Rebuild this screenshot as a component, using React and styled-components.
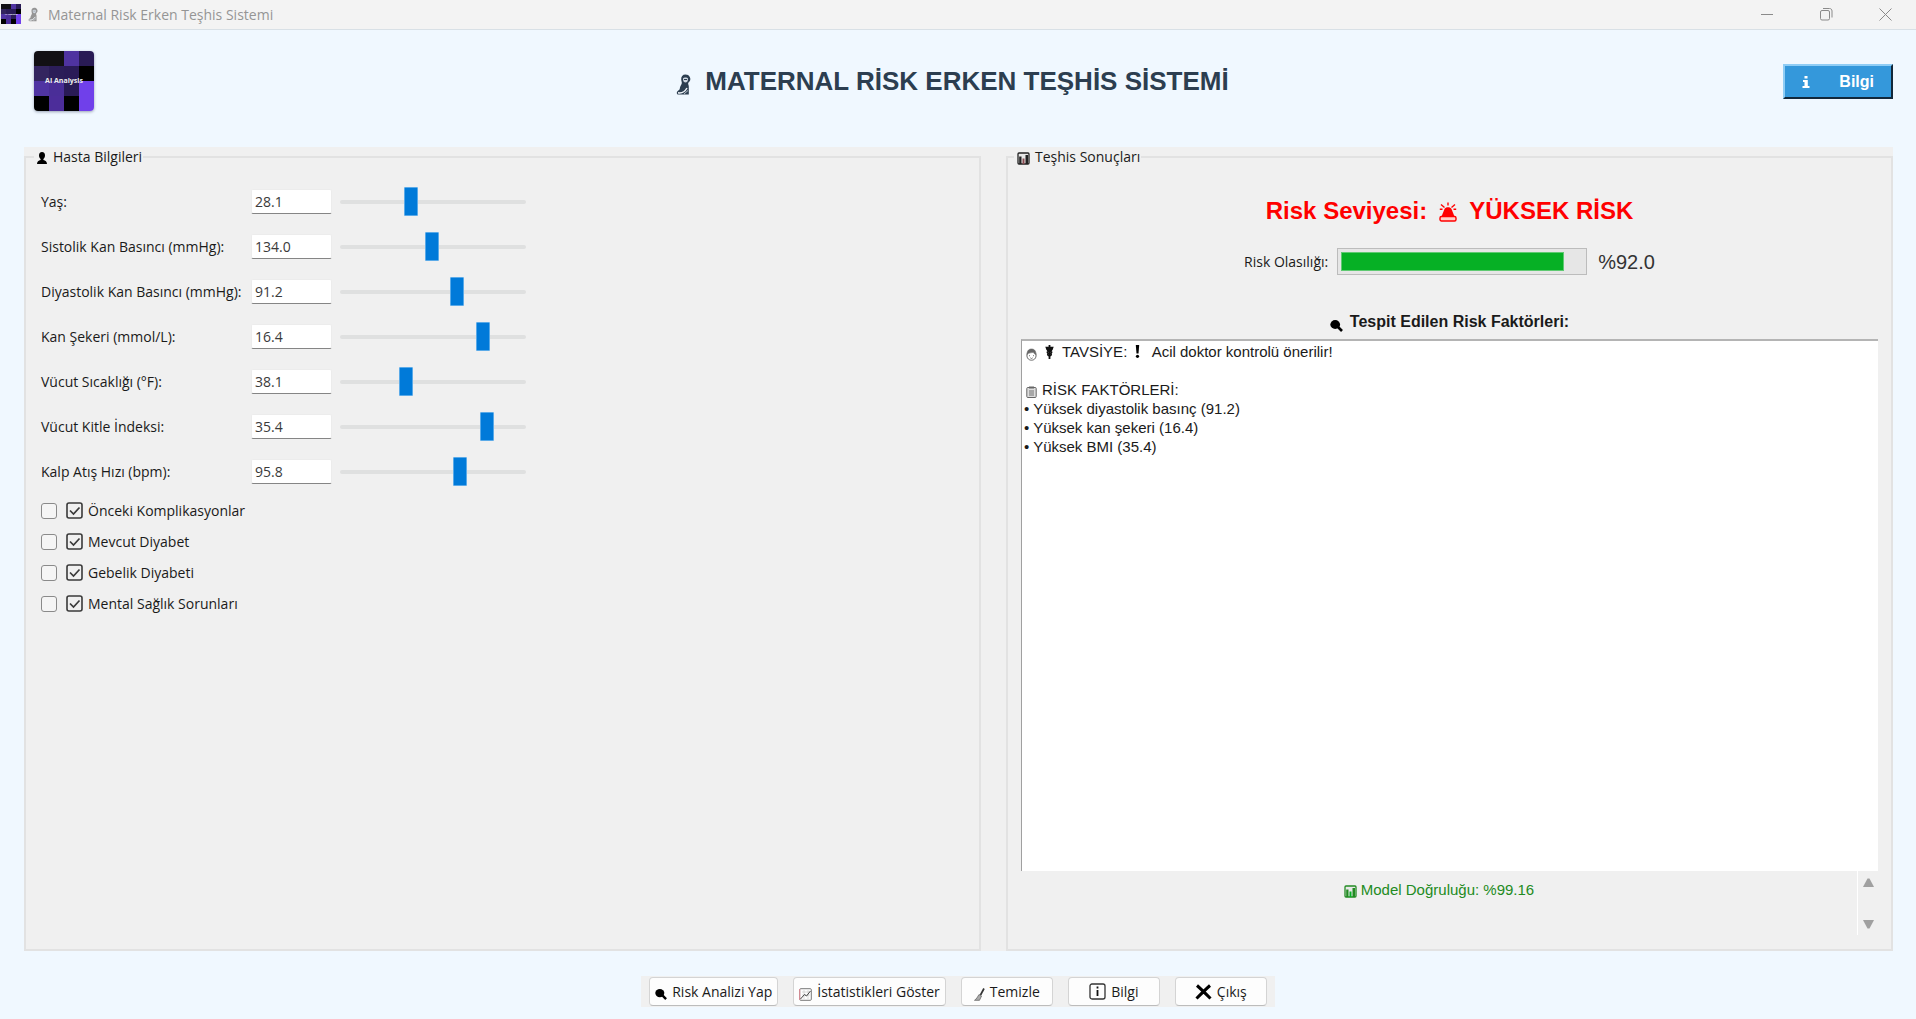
import React from "react";
import styled, { createGlobalStyle } from "styled-components";

const GlobalStyle = createGlobalStyle`
  * {
    box-sizing: border-box;
  }
  body {
    margin: 0;
    background: #f0f8ff;
    color: #1a1a1a;
    font-family: "Open Sans", "Noto Sans", sans-serif;
    font-size: 14px;
  }
`;

const arial = `"Liberation Sans", Arial, sans-serif`;

const Window = styled.div`
  display: flex;
  flex-direction: column;
  min-height: 100vh;
`;

const TitleBar = styled.div`
  display: flex;
  align-items: center;
  height: 30px;
  padding: 0 24px 1px 1px;
  background: #f3f3f3;
  border-bottom: 1px solid #d8e0e6;
  color: #959595;
`;

const TitleText = styled.span`
  flex: 1;
  margin-left: 10px;
  font-size: 14px;
`;

const TitleIcon = styled.span`
  display: flex;
  margin-left: 7px;
`;

const WindowButtons = styled.div`
  display: flex;
  gap: 46px;
`;

const WindowButton = styled.button`
  display: flex;
  padding: 0;
  border: none;
  background: none;
  color: #8a8a8a;
`;

const Header = styled.header`
  display: flex;
  align-items: center;
  height: 117px;
  padding: 0 23px 15px 34px;
`;

const LogoBox = styled.div`
  display: flex;
  margin: 0 28px 0 0;
  border-radius: 4px;
  overflow: hidden;
  box-shadow: 0 1px 3px #9aa3b5;
`;

const Heading = styled.h1`
  display: flex;
  flex: 1;
  align-items: center;
  justify-content: center;
  gap: 14px;
  margin: 0;
  color: #2c3e50;
  font-family: ${arial};
  font-size: 26px;
  line-height: 30px;

  svg {
    margin-top: 6px;
  }
`;

const InfoButton = styled.button`
  display: flex;
  align-items: center;
  justify-content: space-between;
  width: 110px;
  height: 35px;
  padding: 2px 17px 0;
  border: 2px solid;
  border-color: #8fcdf5 #12283a #12283a #8fcdf5;
  background: #3498db;
  color: white;
  font-family: ${arial};
  font-size: 16px;
  font-weight: bold;
`;

const Panels = styled.main`
  display: grid;
  flex: 1;
  grid-template-columns: 957fr 887fr;
  gap: 25px;
  margin: 0 23px 0 24px;
  background: #f0f0f0;
`;

const Panel = styled.fieldset`
  display: flex;
  flex-direction: column;
  min-width: 0;
  margin: 0;
  padding: 0 ${(props) => props.$side}px 14px;
  border: 2px solid #e2e2e2;
`;

const Legend = styled.legend`
  display: flex;
  align-items: center;
  gap: ${(props) => props.$gap}px;
  height: 19px;
  margin-left: -7px;
  padding: 0 1px 0 3px;
  line-height: 18px;

  svg {
    margin-top: 3px;
  }
`;

const Fields = styled.div`
  padding-top: 13px;
`;

const Field = styled.div`
  display: grid;
  grid-template-columns: 210px 81px 186px;
  align-items: center;
  height: 45px;
`;

const FieldLabel = styled.label`
  white-space: nowrap;
`;

const NumberBox = styled.input`
  width: 100%;
  height: 25px;
  padding: 0 3px;
  border: 1px solid #ececec;
  border-bottom: 1px solid #858585;
  border-radius: 2px;
  outline: none;
  background: white;
  color: #3a3a3a;
  font: inherit;
`;

const Slider = styled.input`
  width: 186px;
  height: 29px;
  margin: 0 0 0 8px;
  background: none;
  appearance: none;

  &::-webkit-slider-runnable-track {
    height: 4px;
    border-radius: 2px;
    background: #dfe0e0;
  }
  &::-webkit-slider-thumb {
    width: 14px;
    height: 29px;
    margin-top: -13px;
    border: 1px solid #5aaae8;
    border-radius: 1px;
    background: #007ad9;
    appearance: none;
  }
`;

const Checks = styled.div`
  padding-top: 1px;
`;

const CheckRow = styled.label`
  display: flex;
  align-items: center;
  height: 31px;
`;

const CheckBox = styled.input`
  width: 16px;
  height: 16px;
  margin: 0 9px 0 0;
  border: 1px solid #8a8a8a;
  border-radius: 3px;
  background: #f5f5f5;
  appearance: none;

  &:checked {
    background: #007ad9;
  }
`;

const CheckText = styled.span`
  margin-left: 5px;
`;

const RiskLevel = styled.div`
  display: flex;
  align-items: flex-end;
  justify-content: center;
  gap: 12px;
  margin-top: 30px;
  color: red;
  font-family: ${arial};
  font-size: 24px;
  font-weight: bold;
  line-height: 30px;
`;

const Probability = styled.div`
  display: flex;
  align-items: center;
  justify-content: center;
  margin-top: 22px;
`;

const ProgressBox = styled.div`
  width: 250px;
  height: 27px;
  margin: 0 11px 0 9px;
  padding: 3px;
  border: 1px solid #bcbcbc;
  background: #e6e6e6;
`;

const ProgressFill = styled.div`
  height: 100%;
  border: 1px solid #5fca72;
  background: #06b025;
`;

const Percent = styled.span`
  color: #333;
  font-family: ${arial};
  font-size: 20px;
  line-height: 24px;
`;

const FactorsTitle = styled.h2`
  display: flex;
  align-items: center;
  justify-content: center;
  gap: 7px;
  margin: 36px 0 7px;
  font-family: ${arial};
  font-size: 16px;
  line-height: 20px;

  svg {
    margin-top: 8px;
  }
`;

const Report = styled.div`
  flex: 1;
  padding: 1px 2px;
  border-top: 2px solid #b4b4b4;
  border-left: 1px solid #a0a0a0;
  background: white;
  font-family: ${arial};
  font-size: 15px;
`;

const Line = styled.div`
  display: flex;
  align-items: center;
  gap: ${(props) => props.$gap || 0}px;
  height: 19px;
  padding-left: ${(props) => (props.$gap ? 2 : 0)}px;
  white-space: pre;

  svg:first-child {
    margin-top: 5px;
  }
`;

const Bottom = styled.div`
  display: flex;
  height: 64px;
`;

const Accuracy = styled.div`
  display: flex;
  flex: 1;
  align-items: center;
  align-self: flex-start;
  justify-content: center;
  gap: 4px;
  height: 36px;
  color: #228b22;
  font-family: ${arial};
  font-size: 15px;

  svg {
    margin-top: 5px;
  }
`;

const ScrollBar = styled.div`
  display: flex;
  flex-direction: column;
  align-items: center;
  justify-content: space-between;
  width: 21px;
  padding: 7px 0 6px;
  border-left: 1px solid white;
`;

const ArrowButton = styled.button`
  display: flex;
  padding: 0;
  border: none;
  background: none;
`;

const Actions = styled.footer`
  display: flex;
  align-self: center;
  gap: 15px;
  margin: 25px 0 12px;
  padding: 1px 8px;
  background: #f0f0f0;
`;

const ActionButton = styled.button`
  display: flex;
  align-items: center;
  justify-content: center;
  gap: 5px;
  min-width: 92px;
  height: 29px;
  padding: 0 5px;
  border: 1px solid #d4d4d4;
  border-bottom-color: #bcbcbc;
  border-radius: 4px;
  background: #fdfdfd;
  color: #1a1a1a;
  font: inherit;
  white-space: nowrap;
`;

const LowIcon = styled.span`
  display: flex;
  margin-top: 5px;
`;

const tiles = [
  ["#121014", "#121014", "#4f33a0", "#291b55"],
  ["#33255f", "#2b1d58", "#2a1b57", "#000"],
  ["#5034a2", "#4a2e98", "#2a1b57", "#7040ea"],
  ["#000", "#4c2d9a", "#000", "#7040ea"],
];

function Logo({ size }) {
  return (
    <svg width={size} height={size} viewBox="0 0 60 60">
      {tiles.map((row, y) =>
        row.map((fill, x) => (
          <rect key={`${x}-${y}`} x={x * 15} y={y * 15} width="15.2" height="15.2" fill={fill} />
        ))
      )}
      <text x="30" y="32" fill="#eee" fontSize="7" fontWeight="bold" textAnchor="middle">
        AI Analysis
      </text>
    </svg>
  );
}

function MotherIcon({ width, height }) {
  return (
    <svg width={width} height={height} viewBox="0 0 15 21">
      <path
        d="M9.500 .5C6.500 .5 5 2.500 5.200 5.500C5.400 7.500 6 8 5.800 9.200C5.500 11 3.800 12.500 3.800 14.500C3.800 15.500 3 16 1.800 17C.2 18.300 .6 20.500 2.500 20.500H12.800V12.500C12.800 10.500 11.500 10 12.500 8.500C14.500 7 14.800 5 13.800 3C13 1.300 11.500 .5 9.500 .5Z"
        fill="currentColor"
      />
      <path d="M7 4.500C8 3.200 11 3.200 12 4.500C12 7.500 10.800 8.500 9.500 8.500C8.200 8.500 7 7.500 7 4.500Z" fill="#cfd8e2" />
      <path d="M8 5.500H11" stroke="currentColor" strokeWidth="1" />
      <path d="M2 18.800C5.500 19.500 9 17.500 11 14" fill="none" stroke="#f0f5fa" strokeWidth="1.500" />
      <path d="M8 20L12 16.500" stroke="#f0f5fa" strokeWidth=".7" />
    </svg>
  );
}

function PersonIcon() {
  return (
    <svg width="10" height="12" viewBox="0 0 10 12">
      <path d="M5 0C7 0 8 1.500 8 3.400C8 5 7 6.400 6.400 7V8C8.500 8.400 10 9.500 10 12H0C0 9.500 1.500 8.400 3.600 8V7C3 6.400 2 5 2 3.400C2 1.500 3 0 5 0Z" />
    </svg>
  );
}

function ChartIcon({ color = "#222", accent = "#8a4a50" }) {
  return (
    <svg width="13" height="13" viewBox="0 0 13 13">
      <rect x="1" y="1" width="11" height="11" rx="1" fill="#e8e8e8" stroke={color} strokeWidth="1.300" />
      <rect x="2.200" y="4.500" width="2.300" height="7.500" fill={color} />
      <rect x="5.500" y="6.500" width="2" height="5.500" fill={accent} />
      <rect x="8.500" y="3" width="2.500" height="9" fill={color} />
    </svg>
  );
}

function SirenIcon() {
  return (
    <svg width="18" height="24" viewBox="0 0 18 24">
      <path d="M9 .5V3.500M2 2.500L5.500 5.500M16 2.500L12.500 5.500M.8 7.200H3.500M17.200 7.200H14.500" stroke="red" strokeWidth="1.400" />
      <path d="M5.500 7C6.500 4.800 11.500 4.800 12.500 7L15.500 14.500H2.500Z" fill="red" />
      <rect x="1" y="14.500" width="16" height="4.500" rx="1.500" fill="#ffd0c8" stroke="red" strokeWidth="1.400" />
    </svg>
  );
}

function LensIcon({ size = 13 }) {
  return (
    <svg width={size} height={size} viewBox="0 0 13 13">
      <ellipse cx="5.200" cy="5.500" rx="4.900" ry="4.400" />
      <path d="M7 7L12 12" stroke="#000" strokeWidth="2.600" />
    </svg>
  );
}

function FaceIcon() {
  return (
    <svg width="11" height="13" viewBox="0 0 11 13" fill="none" stroke="#666">
      <path d="M1.200 5.500C.2 9 2 12.200 5.500 12.200C9 12.200 10.800 9 9.800 5.500" />
      <path d="M1 6.500C1 2 3.500 1 5.500 1C7.500 1 10 2 10 6.500C8.500 6.500 8 4.800 7 4.300C5 5 3 4.500 1 6.500Z" fill="#666" strokeWidth=".6" />
      <path d="M3.500 7.200V8.200M7.500 7.200V8.200M4.300 9.800L5.500 10.500L6.700 9.800" strokeWidth=".9" />
    </svg>
  );
}

function StaffIcon() {
  return (
    <svg width="9" height="14" viewBox="0 0 9 14">
      <path d="M4.500 0V14" stroke="#111" strokeWidth="1.800" />
      <path d="M.3 1.800H8.700L7.500 5.200H1.500Z" fill="#111" />
      <path d="M2 5.500C8 6.500 7.500 8 4.500 8.500C2 9 2 10.500 5 11M7 5.500C1 6.500 1.500 8 4.500 8.500C7 9 7 10.500 4 11" fill="none" stroke="#111" strokeWidth="1.600" />
    </svg>
  );
}

function BangIcon() {
  return (
    <svg width="5" height="13" viewBox="0 0 5 13">
      <path d="M.8 0H4.200L3.500 8.500H1.500Z" />
      <circle cx="2.500" cy="11.300" r="1.600" />
    </svg>
  );
}

function ClipboardIcon() {
  return (
    <svg width="11" height="12" viewBox="0 0 11 12" fill="none" stroke="#666">
      <rect x=".8" y="1.500" width="9.400" height="10" rx="1" fill="#ddd" />
      <path d="M3 1.500H8" strokeWidth="2" />
      <path d="M3 5H8M3 7H8M3 9H8" strokeWidth=".9" />
    </svg>
  );
}

function TrendIcon() {
  return (
    <svg width="13" height="13" viewBox="0 0 13 13" fill="none">
      <rect x=".7" y=".7" width="11.600" height="11.600" rx="1" stroke="#777" />
      <path d="M.7 1V12" stroke="#e08a94" />
      <path d="M3 4H11M3 7H11M5 2V11M9 2V11" stroke="#ccc" strokeWidth=".7" />
      <path d="M1.500 11L5.500 6.500L7.500 8L11.500 3" stroke="#444" strokeWidth="1" />
    </svg>
  );
}

function BroomIcon() {
  return (
    <svg width="11" height="13" viewBox="0 0 11 13">
      <path d="M10 .5L6.500 7" stroke="#333" strokeWidth="1.700" />
      <path d="M5 6.500L7.500 8L5.500 12.300H.5C2.500 11 3.500 9 5 6.500Z" fill="#aaa" stroke="#666" strokeWidth=".8" />
    </svg>
  );
}

function InfoIcon() {
  return (
    <svg width="17" height="17" viewBox="0 0 17 17" fill="none" stroke="#333">
      <rect x="1" y="1" width="15" height="15" rx="2" strokeWidth="1.300" />
      <path d="M8.500 7V13M8.500 3.500V5.500" stroke="#111" strokeWidth="1.800" />
    </svg>
  );
}

function CrossIcon() {
  return (
    <svg width="17" height="16" viewBox="0 0 17 16">
      <path d="M2 1.500C6 5 11 10 15.500 14.500M15 1.500C11 5 6 10 1.500 14.500" stroke="#000" strokeWidth="3" />
    </svg>
  );
}

function TickIcon() {
  return (
    <svg width="17" height="17" viewBox="0 0 17 17" fill="none" stroke="#3a3a3a">
      <rect x="1" y="1" width="15" height="15" rx="2" strokeWidth="1.600" />
      <path d="M4 8.500L7.500 12L13.500 5.500" strokeWidth="1.700" />
    </svg>
  );
}

const fields = [
  { id: "yas", label: "Yaş:", value: "28.1", min: 15, max: 50 },
  { id: "sistolik", label: "Sistolik Kan Basıncı (mmHg):", value: "134.0", min: 70, max: 200 },
  { id: "diyastolik", label: "Diyastolik Kan Basıncı (mmHg):", value: "91.2", min: 40, max: 120 },
  { id: "seker", label: "Kan Şekeri (mmol/L):", value: "16.4", min: 3, max: 20 },
  { id: "sicaklik", label: "Vücut Sıcaklığı (°F):", value: "38.1", min: 35, max: 44 },
  { id: "bmi", label: "Vücut Kitle İndeksi:", value: "35.4", min: 15, max: 40 },
  { id: "nabiz", label: "Kalp Atış Hızı (bpm):", value: "95.8", min: 50, max: 120 },
];

const checks = [
  "Önceki Komplikasyonlar",
  "Mevcut Diyabet",
  "Gebelik Diyabeti",
  "Mental Sağlık Sorunları",
];

const factors = [
  "Yüksek diyastolik basınç (91.2)",
  "Yüksek kan şekeri (16.4)",
  "Yüksek BMI (35.4)",
];

export default class App extends React.Component {
  state = {
    values: Object.fromEntries(fields.map((f) => [f.id, f.value])),
    probability: 92,
  };

  change = (e) => {
    const { name, value } = e.target;
    this.setState((s) => ({ values: { ...s.values, [name]: value } }));
  };

  slide = (e) => {
    const { name, value } = e.target;
    this.setState((s) => ({ values: { ...s.values, [name]: Number(value).toFixed(1) } }));
  };

  render() {
    const { values, probability } = this.state;
    return (
      <Window>
        <GlobalStyle />
        <TitleBar>
          <Logo size={20} />
          <TitleIcon>
            <MotherIcon width={10} height={15} />
          </TitleIcon>
          <TitleText>Maternal Risk Erken Teşhis Sistemi</TitleText>
          <WindowButtons>
            <WindowButton aria-label="Simge durumuna küçült">
              <svg width="13" height="13" viewBox="0 0 13 13" stroke="currentColor">
                <path d="M0 6.500H12" />
              </svg>
            </WindowButton>
            <WindowButton aria-label="Önceki boyut">
              <svg width="13" height="13" viewBox="0 0 13 13" fill="none" stroke="currentColor">
                <rect x=".5" y="2.500" width="9" height="9.500" rx="1.500" />
                <path d="M3 .5H9.500C11 .5 12 1.500 12 3V9.500" />
              </svg>
            </WindowButton>
            <WindowButton aria-label="Kapat">
              <svg width="13" height="13" viewBox="0 0 13 13" stroke="currentColor">
                <path d="M.5 .5L12.500 12.500M12.500 .5L.5 12.500" />
              </svg>
            </WindowButton>
          </WindowButtons>
        </TitleBar>

        <Header>
          <LogoBox>
            <Logo size={60} />
          </LogoBox>
          <Heading>
            <MotherIcon width={15} height={21} />
            MATERNAL RİSK ERKEN TEŞHİS SİSTEMİ
          </Heading>
          <InfoButton>
            <svg width="8" height="12" viewBox="0 0 8 12" fill="white">
              <path d="M2.500 0H5.500V2.500H2.500ZM1 4H5.800V10H7.500V12H.5V10H2.500V6H1Z" />
            </svg>
            Bilgi
          </InfoButton>
        </Header>

        <Panels>
          <Panel $side={15}>
            <Legend $gap={6}>
              <PersonIcon />
              Hasta Bilgileri
            </Legend>
            <Fields>
              {fields.map((f) => (
                <Field key={f.id}>
                  <FieldLabel htmlFor={f.id}>{f.label}</FieldLabel>
                  <NumberBox
                    id={f.id}
                    name={f.id}
                    type="text"
                    value={values[f.id]}
                    onChange={this.change}
                  />
                  <Slider
                    name={f.id}
                    type="range"
                    aria-label={f.label}
                    min={f.min}
                    max={f.max}
                    step="0.1"
                    value={values[f.id]}
                    onChange={this.slide}
                  />
                </Field>
              ))}
              <Checks>
                {checks.map((text) => (
                  <CheckRow key={text}>
                    <CheckBox type="checkbox" />
                    <TickIcon />
                    <CheckText>{text}</CheckText>
                  </CheckRow>
                ))}
              </Checks>
            </Fields>
          </Panel>

          <Panel $side={13}>
            <Legend $gap={5}>
              <ChartIcon />
              Teşhis Sonuçları
            </Legend>
            <RiskLevel>
              <span>Risk Seviyesi:</span>
              <SirenIcon />
              <span>YÜKSEK RİSK</span>
            </RiskLevel>
            <Probability>
              <span>Risk Olasılığı:</span>
              <ProgressBox>
                <ProgressFill style={{ width: `${probability}%` }} />
              </ProgressBox>
              <Percent>%{probability.toFixed(1)}</Percent>
            </Probability>
            <FactorsTitle>
              <LensIcon />
              Tespit Edilen Risk Faktörleri:
            </FactorsTitle>
            <Report>
              <Line $gap={8}>
                <FaceIcon />
                <StaffIcon />
                <span>TAVSİYE:</span>
                <BangIcon />
                <span> Acil doktor kontrolü önerilir!</span>
              </Line>
              <Line />
              <Line $gap={5}>
                <ClipboardIcon />
                <span>RİSK FAKTÖRLERİ:</span>
              </Line>
              {factors.map((text) => (
                <Line key={text}>• {text}</Line>
              ))}
            </Report>
            <Bottom>
              <Accuracy>
                <ChartIcon color="#228b22" accent="#06b025" />
                Model Doğruluğu: %99.16
              </Accuracy>
              <ScrollBar>
                <ArrowButton aria-label="Yukarı">
                  <svg width="11" height="9" viewBox="0 0 11 9" fill="#a0a0a0">
                    <path d="M4.500 .5H6.500L11 9H0Z" />
                  </svg>
                </ArrowButton>
                <ArrowButton aria-label="Aşağı">
                  <svg width="11" height="9" viewBox="0 0 11 9" fill="#a0a0a0">
                    <path d="M0 0H11L6.500 8.500H4.500Z" />
                  </svg>
                </ArrowButton>
              </ScrollBar>
            </Bottom>
          </Panel>
        </Panels>

        <Actions>
          <ActionButton>
            <LowIcon>
              <LensIcon size={12} />
            </LowIcon>
            Risk Analizi Yap
          </ActionButton>
          <ActionButton>
            <LowIcon>
              <TrendIcon />
            </LowIcon>
            İstatistikleri Göster
          </ActionButton>
          <ActionButton>
            <LowIcon>
              <BroomIcon />
            </LowIcon>
            Temizle
          </ActionButton>
          <ActionButton>
            <InfoIcon />
            Bilgi
          </ActionButton>
          <ActionButton>
            <CrossIcon />
            Çıkış
          </ActionButton>
        </Actions>
      </Window>
    );
  }
}
